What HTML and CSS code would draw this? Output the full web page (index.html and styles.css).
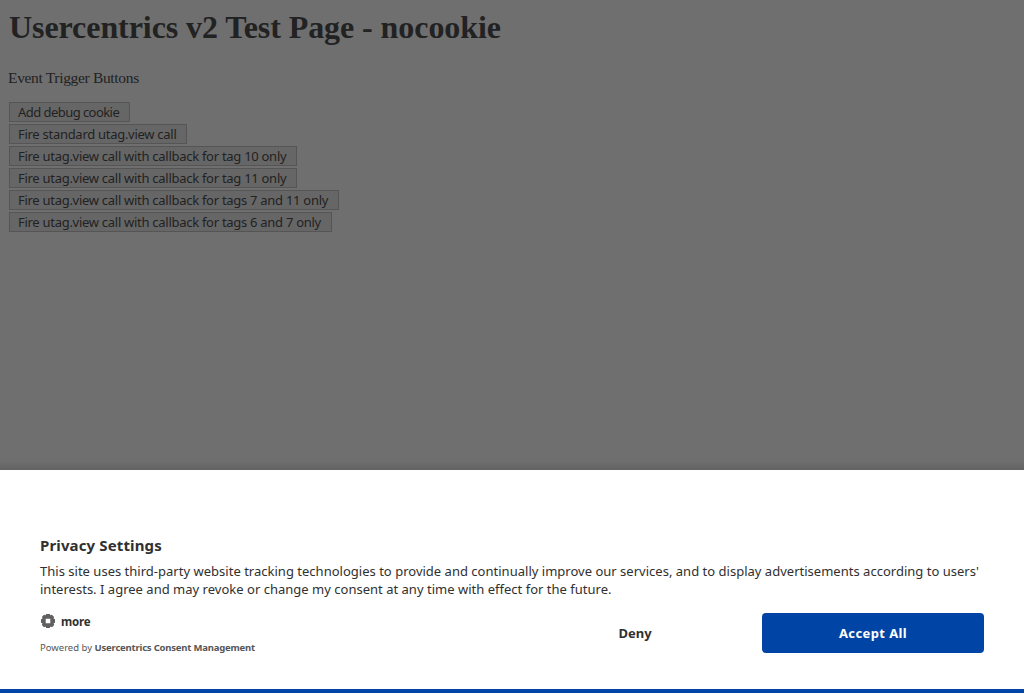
FILE: index.html
```html
<!DOCTYPE html>
<html lang="en">
<head>
<meta charset="utf-8">
<title>Usercentrics v2 Test Page - nocookie</title>
<link rel="stylesheet" href="styles.css">
</head>
<body>
<main class="page">
  <h1 class="title">Usercentrics v2 Test Page - nocookie</h1>
  <p class="intro">Event Trigger Buttons</p>
  <div class="triggers">
    <button class="trigger w1">Add debug cookie</button>
    <button class="trigger w2">Fire standard utag.view call</button>
    <button class="trigger w3">Fire utag.view call with callback for tag 10 only</button>
    <button class="trigger w3">Fire utag.view call with callback for tag 11 only</button>
    <button class="trigger w4">Fire utag.view call with callback for tags 7 and 11 only</button>
    <button class="trigger w5">Fire utag.view call with callback for tags 6 and 7 only</button>
  </div>
</main>
<section class="banner" role="dialog" aria-label="Privacy Settings">
  <h2 class="heading">Privacy Settings</h2>
  <p class="copy">This site uses third-party website tracking technologies to provide and continually improve our services, and to display advertisements according to users'<br>interests. I agree and may revoke or change my consent at any time with effect for the future.</p>
  <div class="footer">
    <div class="links">
      <div class="more">
        <svg class="gear" viewBox="0 0 14 14" width="14" height="14"><path fill="#606060" fill-rule="evenodd" d="M5.2 0h3.600l.5 1.200 1.600-.5 2.200 2.200-.5 1.500 1.400.8v3.600l-1.300.5.5 1.700-2.200 2.200-1.600-.6-.6 1.400H5.200l-.6-1.400-1.600.6L.9 11l.6-1.700L0 8.800V5.200l1.500-.8L1 2.800 3 .8l1.700.5zM4.700 4.700v4.600h4.600V4.700z"/></svg>
        <span class="more-label">more</span>
      </div>
      <div class="powered"><span class="by">Powered by </span><b class="brand">Usercentrics Consent Management</b></div>
    </div>
    <div class="actions">
      <button class="action deny">Deny</button>
      <button class="action accept">Accept All</button>
    </div>
  </div>
</section>
</body>
</html>
```
FILE: styles.css
```css
* { box-sizing: border-box; }
body { margin: 0; height: 693px; display: flex; flex-direction: column; background: #6f6f6f; color: #222; overflow: hidden; }
.page { height: 470px; padding: 8px 8px 0; background: linear-gradient(#6f6f6f 0 461px, #626262 470px); font-family: "Liberation Serif", serif; }
.title { margin: 0; padding: 1px 0 0 1px; height: 60px; font-size: 32px; line-height: 37px; letter-spacing: -0.07px; white-space: nowrap; }
.intro { margin: 0; height: 34px; font-size: 15.500px; line-height: 19px; letter-spacing: -0.33px; }
.triggers { display: flex; flex-direction: column; align-items: flex-start; gap: 2px; padding-left: 1px; }
.trigger { height: 20px; padding: 0 0 0 8px; border: 1px solid #555; background: #666; color: #222; font: 13px/18px "Noto Sans", sans-serif; letter-spacing: -0.28px; text-align: left; white-space: nowrap; }
.w1 { width: 121px; letter-spacing: -0.55px; }
.w2 { width: 178px; }
.w3 { width: 288px; }
.w4 { width: 330px; }
.w5 { width: 323px; }
.banner { height: 223px; padding: 65px 40px 0; background: #fff; color: #303030; border-bottom: 4px solid #0045a5; font-family: "Noto Sans", sans-serif; }
.heading { margin: 0; height: 27px; font-size: 15px; line-height: 20px; letter-spacing: 0.13px; }
.copy { margin: 0; height: 51px; font-size: 13px; line-height: 18px; letter-spacing: 0.013px; white-space: nowrap; }
.footer { display: flex; justify-content: space-between; }
.more { display: flex; align-items: flex-start; gap: 6px; height: 17px; padding-left: 1px; }
.more-label { font-size: 11.500px; font-weight: 700; line-height: 18px; letter-spacing: -0.15px; }
.gear { display: block; margin-top: 1px; }
.powered { margin-top: 9px; font-size: 9.500px; line-height: 17px; color: #565656; white-space: nowrap; }
.by { white-space: pre; }
.brand { letter-spacing: -0.2px; }
.actions { display: flex; gap: 16px; }
.action { width: 222px; height: 40px; padding: 0; border: 0; border-radius: 4px; background: #fff; color: #303030; font: 700 13px/40px "Noto Sans", sans-serif; }
.accept { background: #0045a5; color: #fff; letter-spacing: 0.4px; }
```
